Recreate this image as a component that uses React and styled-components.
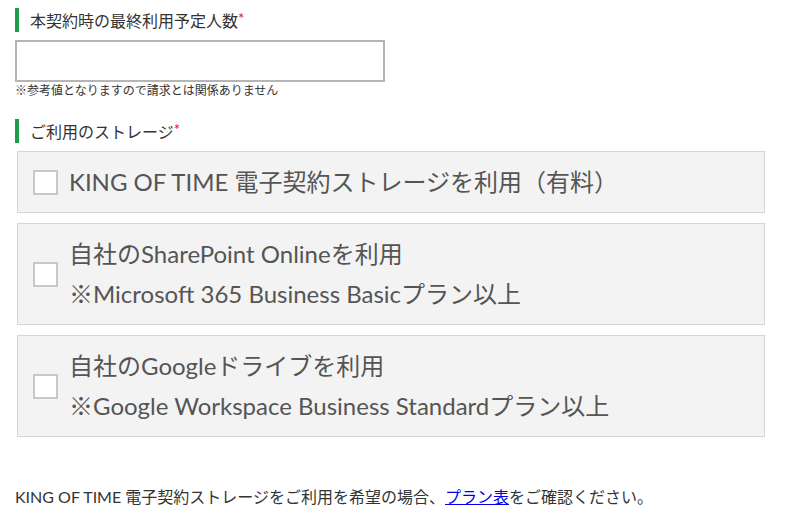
import React, { useState } from 'react';
import styled, { createGlobalStyle } from 'styled-components';

const GlobalStyle = createGlobalStyle`
  body {
    margin: 0;
    background: #fff;
    font-family: Lato, "Noto Sans CJK JP", sans-serif;
    color: #333;
  }
`;

const Page = styled.div`
  padding: 8px 36px 0 15px;
`;

const Field = styled.div`
  margin-bottom: ${props => props.gap || 0}px;
`;

const Label = styled.div`
  display: flex;
  align-items: center;
  height: 24px;
  padding-left: 11px;
  border-left: 4px solid #1e9b4b;
  font-size: 16px;
  color: #333;
  margin-bottom: ${props => props.below}px;
  span { color: #e0003c; font-size: 15px; align-self: flex-start; margin-top: 1px; }
`;

const TextInput = styled.input`
  display: block;
  box-sizing: border-box;
  width: 370px;
  height: 42px;
  border: 2px solid #b5b5b5;
  padding: 0 10px;
  font-size: 16px;
  outline: none;
`;

const Note = styled.div`
  font-size: 12px;
  line-height: 18px;
  color: #333;
`;

const Options = styled.div`
  display: flex;
  flex-direction: column;
  gap: 10px;
  margin-left: 2px;
`;

const Option = styled.label`
  display: flex;
  align-items: center;
  gap: 11px;
  padding: 10px 15px;
  background: #f3f3f3;
  border: 1px solid #d5d5d5;
  cursor: pointer;
`;

const Box = styled.span`
  flex: none;
  box-sizing: border-box;
  width: 25px;
  height: 25px;
  background: #fff;
  border: 2px solid ${props => (props.checked ? '#1e9b4b' : '#c8c8c8')};
`;

const OptionText = styled.div`
  font-size: 24px;
  line-height: 40px;
  color: #555;
`;

const Footer = styled.p`
  margin: 48px 0 0;
  font-size: 16px;
  line-height: 24px;
  color: #333;
  a { color: #0000ee; text-decoration: underline; }
`;

const storages = [
  ['KING OF TIME 電子契約ストレージを利用（有料）'],
  ['自社のSharePoint Onlineを利用', '※Microsoft 365 Business Basicプラン以上'],
  ['自社のGoogleドライブを利用', '※Google Workspace Business Standardプラン以上'],
];

export default function App() {
  const [checked, setChecked] = useState([]);

  const toggle = (i) =>
    setChecked(c => (c.includes(i) ? c.filter(x => x !== i) : [...c, i]));

  return (
    <Page>
      <GlobalStyle />
      <Field gap={19}>
        <Label below={8}>本契約時の最終利用予定人数<span>*</span></Label>
        <TextInput type="text" />
        <Note>※参考値となりますので請求とは関係ありません</Note>
      </Field>

      <Field>
        <Label below={8}>ご利用のストレージ<span>*</span></Label>
        <Options>
          {storages.map((lines, i) => (
            <Option key={i} onClick={() => toggle(i)}>
              <Box checked={checked.includes(i)} />
              <OptionText>
                {lines.map(l => <div key={l}>{l}</div>)}
              </OptionText>
            </Option>
          ))}
        </Options>
      </Field>

      <Footer>
        KING OF TIME 電子契約ストレージをご利用を希望の場合、<a href="#plan">プラン表</a>をご確認ください。
      </Footer>
    </Page>
  );
}
